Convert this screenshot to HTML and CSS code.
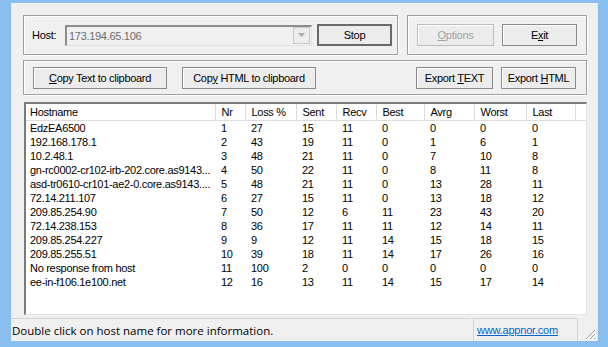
FILE: index.html
```html
<!DOCTYPE html>
<html lang="en">
<head>
    <meta charset="UTF-8">
    <meta name="viewport" content="width=device-width, initial-scale=1.0">
    <title>WinMTR</title>
    <link rel="stylesheet" href="styles.css">
</head>
<body>
    <div class="window">
        <div class="content">
            <div class="top-row">
                <div class="group host-group">
                    <label class="host-label" for="host">Host:</label>
                    <div class="combo" id="host">
                        <span class="combo-text">173.194.65.106</span>
                        <span class="combo-arrow">
                            <svg width="7" height="4" viewBox="0 0 7 4"><path d="M0 0h7L3.5 4z" fill="#a8a8a8"/></svg>
                        </span>
                    </div>
                    <button class="btn btn-default">Stop</button>
                </div>
                <div class="group side-group">
                    <button class="btn btn-left" disabled><u>O</u>ptions</button>
                    <button class="btn btn-right">E<u>x</u>it</button>
                </div>
            </div>

            <div class="group export-group">
                <button class="btn btn-copy"><u>C</u>opy Text to clipboard</button>
                <button class="btn btn-copy">Cop<u>y</u> HTML to clipboard</button>
                <button class="btn btn-left push">Export <u>T</u>EXT</button>
                <button class="btn btn-right">Export <u>H</u>TML</button>
            </div>

            <div class="listview">
                <table>
                    <colgroup>
                        <col class="c-host"><col class="c-nr"><col class="c-loss"><col class="c-sent"><col class="c-recv">
                        <col class="c-best"><col class="c-avrg"><col class="c-worst"><col class="c-last"><col>
                    </colgroup>
                    <thead>
                        <tr>
                            <th class="host">Hostname</th><th>Nr</th><th>Loss %</th><th>Sent</th><th>Recv</th>
                            <th>Best</th><th>Avrg</th><th>Worst</th><th>Last</th><th class="filler"></th>
                        </tr>
                    </thead>
                    <tbody>
                        <tr><td class="host">EdzEA6500</td><td>1</td><td>27</td><td>15</td><td>11</td><td>0</td><td>0</td><td>0</td><td>0</td><td></td></tr>
                        <tr><td class="host">192.168.178.1</td><td>2</td><td>43</td><td>19</td><td>11</td><td>0</td><td>1</td><td>6</td><td>1</td><td></td></tr>
                        <tr><td class="host">10.2.48.1</td><td>3</td><td>48</td><td>21</td><td>11</td><td>0</td><td>7</td><td>10</td><td>8</td><td></td></tr>
                        <tr><td class="host">gn-rc0002-cr102-irb-202.core.as9143...</td><td>4</td><td>50</td><td>22</td><td>11</td><td>0</td><td>8</td><td>11</td><td>8</td><td></td></tr>
                        <tr><td class="host">asd-tr0610-cr101-ae2-0.core.as9143....</td><td>5</td><td>48</td><td>21</td><td>11</td><td>0</td><td>13</td><td>28</td><td>11</td><td></td></tr>
                        <tr><td class="host">72.14.211.107</td><td>6</td><td>27</td><td>15</td><td>11</td><td>0</td><td>13</td><td>18</td><td>12</td><td></td></tr>
                        <tr><td class="host">209.85.254.90</td><td>7</td><td>50</td><td>12</td><td>6</td><td>11</td><td>23</td><td>43</td><td>20</td><td></td></tr>
                        <tr><td class="host">72.14.238.153</td><td>8</td><td>36</td><td>17</td><td>11</td><td>11</td><td>12</td><td>14</td><td>11</td><td></td></tr>
                        <tr><td class="host">209.85.254.227</td><td>9</td><td>9</td><td>12</td><td>11</td><td>14</td><td>15</td><td>18</td><td>15</td><td></td></tr>
                        <tr><td class="host">209.85.255.51</td><td>10</td><td>39</td><td>18</td><td>11</td><td>14</td><td>17</td><td>26</td><td>16</td><td></td></tr>
                        <tr><td class="host">No response from host</td><td>11</td><td>100</td><td>2</td><td>0</td><td>0</td><td>0</td><td>0</td><td>0</td><td></td></tr>
                        <tr><td class="host">ee-in-f106.1e100.net</td><td>12</td><td>16</td><td>13</td><td>11</td><td>14</td><td>15</td><td>17</td><td>14</td><td></td></tr>
                    </tbody>
                </table>
            </div>
        </div>

        <div class="statusbar">
            <div class="panel panel-main">Double click on host name for more information.</div>
            <div class="panel panel-link"><a href="#">www.appnor.com</a></div>
            <svg class="grip" width="12" height="12" viewBox="0 0 12 12">
                <path d="M11 2L2 11M11 6L6 11M11 10L10 11" stroke="#a0a0a0" stroke-width="1"/>
                <path d="M12 3L3 12M12 7L7 12" stroke="#ffffff" stroke-width="1"/>
            </svg>
        </div>
    </div>
</body>
</html>
```

FILE: styles.css
```css
body {
    margin: 0;
    padding: 0;
    background-color: #88bff0;
    font-family: "Liberation Sans", Arial, sans-serif;
    font-size: 11px;
    letter-spacing: -0.3px;
    color: #000;
}
.window {
    margin: 3px 11px 0 11px;
    height: 338px;
    background-color: #f0f0f0;
    display: flex;
    flex-direction: column;
    box-shadow: 1px 0 0 #dce8f4;
}
.content {
    padding: 12px 10px 0 12px;
    display: flex;
    flex-direction: column;
}
.top-row {
    display: flex;
    gap: 9px;
    height: 40px;
}
.group {
    border: 1px solid #a0a0a0;
    box-shadow: inset 1px 1px 0 #fff, 1px 1px 0 #fff;
    box-sizing: border-box;
    display: flex;
    align-items: center;
}
.host-group {
    width: 375px;
    padding-left: 8px;
}
.host-label {
    width: 33px;
}
.combo {
    width: 247px;
    height: 21px;
    box-sizing: border-box;
    border-style: solid;
    border-width: 2px 1px 1px 2px;
    border-color: #8d8d8d #e3e3e3 #e3e3e3 #8d8d8d;
    background-color: #f0f0f0;
    display: flex;
    align-items: center;
    position: relative;
}
.combo-text {
    padding-left: 2px;
    color: #6d6d6d;
}
.combo-arrow {
    position: absolute;
    right: 1px;
    top: 0;
    width: 17px;
    height: 17px;
    box-sizing: border-box;
    border: 1px solid #c9c9c9;
    background-color: #ececec;
    display: flex;
    align-items: center;
    justify-content: center;
}
.btn {
    font-family: inherit;
    font-size: 11px;
    letter-spacing: -0.3px;
    color: #000;
    height: 22px;
    padding: 0;
    box-sizing: border-box;
    background-color: #ececec;
    border: 1px solid #8a8a8a;
    box-shadow: inset 1px 1px 0 #fff;
    cursor: pointer;
}
.btn u {
    text-decoration: underline;
}
.btn:disabled {
    color: #a3a3a3;
    border-color: #bdbdbd;
}
.btn-default {
    width: 75px;
    margin-left: 5px;
    border: 2px solid #6a6a6a;
    box-shadow: none;
}
.side-group {
    width: 180px;
    padding-left: 9px;
}
.btn-left {
    width: 77px;
}
.btn-right {
    width: 75px;
    margin-left: 8px;
}
.export-group {
    height: 35px;
    margin-top: 5px;
    padding: 0 10px 0 9px;
}
.btn-copy {
    width: 134px;
    margin-right: 15px;
}
.push {
    margin-left: auto;
}
.listview {
    margin: 7px 0 0 1px;
    height: 213px;
    box-sizing: border-box;
    background-color: #fff;
    border-style: solid;
    border-width: 2px 1px 1px 2px;
    border-color: #7a7a7a #e3e3e3 #e3e3e3 #7a7a7a;
    overflow: hidden;
}
table {
    border-collapse: collapse;
    table-layout: fixed;
    width: 560px;
}
.c-host { width: 189px; }
.c-nr { width: 30px; }
.c-loss { width: 51px; }
.c-sent { width: 40px; }
.c-recv { width: 40px; }
.c-best { width: 48px; }
.c-avrg { width: 50px; }
.c-worst { width: 52px; }
.c-last { width: 49px; }
th {
    height: 16px;
    padding: 0 0 0 6px;
    text-align: left;
    font-weight: normal;
    border-right: 1px solid #dcdcdc;
    border-bottom: 1px solid #dcdcdc;
    box-sizing: border-box;
    white-space: nowrap;
    overflow: hidden;
}
th.filler {
    border-right: none;
}
td {
    height: 14px;
    line-height: 14px;
    padding: 0 0 0 6px;
    white-space: nowrap;
    overflow: hidden;
}
th.host, td.host {
    padding-left: 4px;
}
.statusbar {
    margin-top: 3px;
    flex: 1;
    display: flex;
    align-items: stretch;
    font-family: "Open Sans", sans-serif;
    font-size: 11.5px;
    letter-spacing: 0;
    position: relative;
}
.panel {
    border-top: 1px solid #d4d4d4;
    display: flex;
    align-items: center;
}
.panel-main {
    width: 459px;
    padding-left: 1px;
}
.panel-link {
    width: 105px;
    box-sizing: border-box;
    margin-left: 2px;
    border-left: 1px solid #d4d4d4;
    border-right: 1px solid #d4d4d4;
    padding-left: 3px;
}
.panel-link a {
    font-family: "Liberation Sans", Arial, sans-serif;
    font-size: 11px;
    letter-spacing: -0.2px;
    color: #0066cc;
    text-decoration: underline;
}
.grip {
    position: absolute;
    right: 1px;
    bottom: 1px;
}
```
